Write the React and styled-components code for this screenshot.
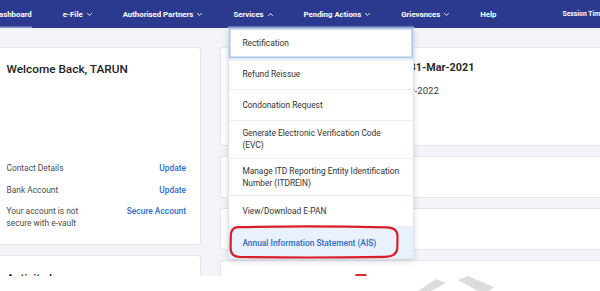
import React from "react";
import styled, { createGlobalStyle, css } from "styled-components";

const GlobalStyle = createGlobalStyle`
  html, body { margin: 0; padding: 0; background: #ffffff; }
  * { box-sizing: border-box; }
`;

const Page = styled.div`
  width: 600px;
  height: 291px;
  overflow: hidden;
  background: #ffffff;
  font-family: Roboto, "Liberation Sans", Arial, sans-serif;
  display: flex;
  flex-direction: column;
`;

const NavBar = styled.nav`
  position: relative;
  z-index: 5;
  height: 28px;
  flex: none;
  background: #2b3a8f;
`;

const NavList = styled.div`
  height: 100%;
  display: flex;
  align-items: stretch;
  gap: 31px;
  margin-left: -6px;
  white-space: nowrap;
`;

const NavItem = styled.div`
  position: relative;
  display: flex;
  align-items: center;
  gap: 4px;
  color: #ffffff;
  font-size: 7.8px;
  font-weight: 700;
  ${(p) =>
    p.$active &&
    css`
      box-shadow: inset 0 -1.5px 0 #8b95c8;
    `}
`;

const SessionText = styled.div`
  display: flex;
  align-items: center;
  margin-left: 35px;
  color: #ffffff;
  font-size: 6.8px;
  font-weight: 700;
`;

const Chevron = ({ up }) => (
  <svg width="5" height="3" viewBox="0 0 5 3" fill="none">
    <path
      d={up ? "M0.5 2.5 L2.5 0.6 L4.5 2.5" : "M0.5 0.5 L2.5 2.4 L4.5 0.5"}
      stroke="#ffffff"
      strokeWidth="0.9"
      strokeLinecap="round"
    />
  </svg>
);

const Dropdown = styled.div`
  position: absolute;
  top: 100%;
  left: -5px;
  width: 186px;
  background: #ffffff;
  border: 1px solid #e1e4ea;
  border-top: none;
  box-shadow: 0 2px 6px rgba(40, 50, 80, 0.18);
  font-weight: 400;
  white-space: normal;
`;

const DropItem = styled.div`
  min-height: 31px;
  display: flex;
  align-items: center;
  padding: 6px 13px 6px 13px;
  border-bottom: 1px solid #eceef2;
  font-size: 8.4px;
  line-height: 12.3px;
  color: #333333;
  ${(p) =>
    p.$focused &&
    css`
      box-shadow: inset 0 0 0 1.5px #a8c4e8, 0 0 2px 1px #d2e1f4;
    `}
  ${(p) =>
    p.$selected &&
    css`
      background: #e8f1fc;
      color: #2b6cc6;
      font-weight: 500;
      border-bottom: none;
    `}
`;

const Annotation = styled.svg`
  position: absolute;
  left: 0;
  top: 197px;
  pointer-events: none;
`;

const Main = styled.main`
  flex: none;
  height: 248px;
  background: #f3f4f8;
  display: grid;
  grid-template-columns: 201px 420px;
  column-gap: 19px;
  align-items: start;
  padding-top: 19px;
  overflow: hidden;
`;

const Column = styled.div`
  display: flex;
  flex-direction: column;
  gap: ${(p) => p.$gap || 10}px;
`;

const Card = styled.section`
  background: #ffffff;
  border: 1px solid #e2e5ec;
  ${(p) => (p.$side === "left" ? "border-left: none; border-radius: 0 3px 3px 0;" : "border-right: none; border-radius: 3px 0 0 3px;")}
  height: ${(p) => (p.$h ? `${p.$h}px` : "auto")};
`;

const WelcomeCard = styled(Card)`
  display: flex;
  flex-direction: column;
  padding: 13px 14px 15px 6.5px;
`;

const CardTitle = styled.h2`
  margin: 0;
  font-size: 11.8px;
  line-height: 16px;
  font-weight: 500;
  color: #222222;
`;

const InfoList = styled.div`
  margin-top: auto;
  display: flex;
  flex-direction: column;
  gap: 10px;
`;

const InfoRow = styled.div`
  display: flex;
  justify-content: space-between;
  align-items: flex-start;
  font-size: 8.4px;
  line-height: 11.4px;
`;

const InfoLabel = styled.span`
  color: #4d4d4d;
  max-width: 80px;
`;

const InfoLink = styled.a`
  color: #2e6bcc;
  font-weight: 500;
  text-decoration: none;
`;

const PaddedCard = styled(Card)`
  padding: ${(p) => p.$pad || "14px 0 0 6.5px"};
`;

const DateLine = styled.div`
  white-space: nowrap;
  color: #2a2a2a;
  ${(p) =>
    p.$strong
      ? css`
          font-size: 10.8px;
          line-height: 14px;
          font-weight: 700;
        `
      : css`
          margin-top: 9.5px;
          font-size: 9.6px;
          line-height: 13px;
          font-weight: 400;
          color: #3a3a3a;
        `}
`;

const HeadingRow = styled.div`
  display: flex;
  align-items: center;
  gap: 5px;
`;

const Badge = styled.span`
  display: inline-block;
  width: 12px;
  height: 12px;
  border-radius: 2px;
  background: #d32a2f;
`;

const Footer = styled.div`
  flex: 1;
  background: #ffffff;
  position: relative;
`;

const services = [
  "Rectification",
  "Refund Reissue",
  "Condonation Request",
  "Generate Electronic Verification Code (EVC)",
  "Manage ITD Reporting Entity Identification Number (ITDREIN)",
  "View/Download E-PAN",
  "Annual Information Statement (AIS)",
];

export default function App() {
  return (
    <Page>
      <GlobalStyle />
      <NavBar>
        <NavList>
          <NavItem $active>Dashboard</NavItem>
          <NavItem>
            e-File <Chevron />
          </NavItem>
          <NavItem>
            Authorised Partners <Chevron />
          </NavItem>
          <NavItem>
            Services <Chevron up />
            <Dropdown>
              {services.map((s, i) => (
                <DropItem
                  key={s}
                  $focused={i === 0}
                  $selected={i === services.length - 1}
                >
                  {s}
                </DropItem>
              ))}
              <Annotation width="172" height="34" viewBox="0 0 172 34">
                <path
                  d="M9 2.2 C50 1.2 120 1.4 158 2.4 C166 2.8 168.5 6 168.5 11 L168.3 23 C168 29 164 31.6 156 31.8 C110 32.6 50 32.6 11 32 C4 31.8 1.6 28.5 1.6 23 L1.8 11 C1.9 5 4 2.4 9 2.2 Z"
                  fill="none"
                  stroke="#d81f2a"
                  strokeWidth="2.2"
                />
              </Annotation>
            </Dropdown>
          </NavItem>
          <NavItem>
            Pending Actions <Chevron />
          </NavItem>
          <NavItem>
            Grievances <Chevron />
          </NavItem>
          <NavItem>Help</NavItem>
          <SessionText>Session Time 14:52</SessionText>
        </NavList>
      </NavBar>

      <Main>
        <Column>
          <WelcomeCard $side="left" $h={198}>
            <CardTitle>Welcome Back, TARUN</CardTitle>
            <InfoList>
              <InfoRow>
                <InfoLabel>Contact Details</InfoLabel>
                <InfoLink>Update</InfoLink>
              </InfoRow>
              <InfoRow>
                <InfoLabel>Bank Account</InfoLabel>
                <InfoLink>Update</InfoLink>
              </InfoRow>
              <InfoRow>
                <InfoLabel>Your account is not secure with e-vault</InfoLabel>
                <InfoLink>Secure Account</InfoLink>
              </InfoRow>
            </InfoList>
          </WelcomeCard>
          <PaddedCard $side="left" $h={60}>
            <CardTitle>Activity Log</CardTitle>
          </PaddedCard>
        </Column>

        <Column>
          <PaddedCard $side="right" $h={99} $pad="12.5px 0 0 16px">
            <DateLine $strong>ITR for AY 2020-21 was e-filed on : 31-Mar-2021</DateLine>
            <DateLine>Returns for AY 2021-22 are due by 31-Mar-2022</DateLine>
          </PaddedCard>
          <Card $side="right" $h={42} />
          <Card $side="right" $h={42} />
          <PaddedCard $side="right" $h={60} $pad="11px 0 0 43px">
            <HeadingRow>
              <CardTitle>Pending Actions</CardTitle>
              <Badge />
            </HeadingRow>
          </PaddedCard>
        </Column>
      </Main>

      <Footer>
        <svg width="600" height="15" viewBox="0 0 600 15">
          <polygon points="418,15 436,3 446,7 431,15" fill="#dcdcdc" />
          <polygon points="458,4 468,0 494,11 489,15 478,15" fill="#dcdcdc" />
        </svg>
      </Footer>
    </Page>
  );
}
